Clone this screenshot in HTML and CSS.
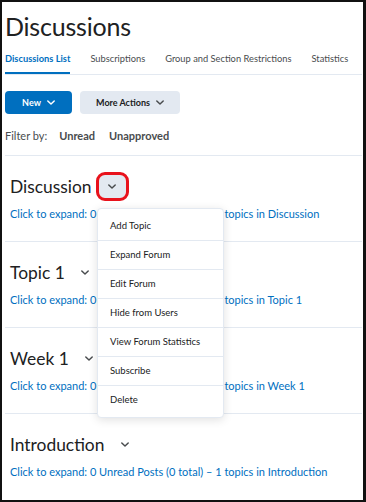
FILE: index.html
```html
<!DOCTYPE html>
<html>
<head>
<meta charset="utf-8">
<link rel="stylesheet" href="styles.css">
</head>
<body>
<div class="frame">
  <h1 class="title">Discussions</h1>
  <nav class="tabs">
    <span class="tab active">Discussions List</span>
    <span class="tab">Subscriptions</span>
    <span class="tab">Group and Section Restrictions</span>
    <span class="tab">Statistics</span>
  </nav>
  <div class="actions">
    <button class="btn primary">New <svg class="chev" viewBox="0 0 10 6"><path d="M1 1l4 4 4-4"/></svg></button>
    <button class="btn secondary">More Actions <svg class="chev" viewBox="0 0 10 6"><path d="M1 1l4 4 4-4"/></svg></button>
  </div>
  <div class="filter">
    <span class="filter-label">Filter by:</span>
    <span class="filter-opt">Unread</span>
    <span class="filter-opt">Unapproved</span>
  </div>

  <section class="forum">
    <div class="forum-head">
      <h2>Discussion</h2>
      <span class="ctx open"><svg class="chev" viewBox="0 0 10 6"><path d="M1 1l4 4 4-4"/></svg></span>
    </div>
    <a class="expand">Click to expand: 0 Unread Posts (0 total) – 1 topics in Discussion</a>
  </section>
  <section class="forum">
    <div class="forum-head">
      <h2>Topic 1</h2>
      <span class="ctx"><svg class="chev" viewBox="0 0 10 6"><path d="M1 1l4 4 4-4"/></svg></span>
    </div>
    <a class="expand">Click to expand: 0 Unread Posts (0 total) – 1 topics in Topic 1</a>
  </section>
  <section class="forum">
    <div class="forum-head">
      <h2>Week 1</h2>
      <span class="ctx"><svg class="chev" viewBox="0 0 10 6"><path d="M1 1l4 4 4-4"/></svg></span>
    </div>
    <a class="expand">Click to expand: 0 Unread Posts (0 total) – 1 topics in Week 1</a>
  </section>
  <section class="forum">
    <div class="forum-head">
      <h2>Introduction</h2>
      <span class="ctx"><svg class="chev" viewBox="0 0 10 6"><path d="M1 1l4 4 4-4"/></svg></span>
    </div>
    <a class="expand">Click to expand: 0 Unread Posts (0 total) – 1 topics in Introduction</a>
  </section>

  <ul class="menu">
    <li>Add Topic</li>
    <li>Expand Forum</li>
    <li>Edit Forum</li>
    <li>Hide from Users</li>
    <li>View Forum Statistics</li>
    <li>Subscribe</li>
    <li>Delete</li>
  </ul>
</div>
</body>
</html>
```

FILE: styles.css
```css
html, body {
  margin: 0;
  padding: 0;
  background: #fff;
}
body {
  font-family: Lato, "Open Sans", sans-serif;
  color: #202122;
}
.frame {
  position: relative;
  box-sizing: border-box;
  width: 366px;
  height: 502px;
  border: 2px solid #111;
  border-right-width: 3px;
  padding: 0 1px 0 3px;
  overflow: hidden;
  background: #fff;
}
.title {
  margin: 9px 0 0 0;
  font-size: 25px;
  font-weight: 400;
  line-height: 30px;
  color: #202122;
  letter-spacing: -0.2px;
}
.tabs {
  display: flex;
  gap: 20px;
  margin-top: 11px;
  border-bottom: 1px solid #e3e9f1;
}
.tab {
  font-size: 9.3px;
  line-height: 14px;
  padding-bottom: 6px;
  color: #494c4e;
  border-bottom: 2px solid transparent;
  white-space: nowrap;
}
.tab.active {
  color: #006fbf;
  font-weight: 700;
  border-bottom-color: #006fbf;
}
.actions {
  display: flex;
  gap: 8px;
  margin-top: 16px;
}
.btn {
  display: flex;
  align-items: center;
  justify-content: center;
  gap: 6px;
  height: 23px;
  border: none;
  border-radius: 4px;
  font-family: Lato, sans-serif;
  font-size: 9px;
  font-weight: 700;
  padding: 0;
}
.btn.primary {
  width: 67px;
  background: #006fbf;
  color: #fff;
}
.btn.primary .chev path { stroke: #fff; }
.btn.secondary {
  width: 100px;
  background: #e3e9f1;
  color: #202122;
}
.chev {
  width: 8px;
  height: 5px;
}
.chev path {
  fill: none;
  stroke: #494c4e;
  stroke-width: 1.8;
  stroke-linecap: round;
  stroke-linejoin: round;
}
.filter {
  display: flex;
  gap: 10px;
  margin-top: 15px;
  font-size: 11px;
  line-height: 14px;
  color: #494c4e;
}
.filter-opt {
  font-weight: 700;
  color: #494c4e;
  margin-left: 2px;
}
.filter-opt + .filter-opt { margin-left: 4px; }
.forum {
  box-sizing: border-box;
  height: 86px;
  border-top: 1px solid #e3e9f1;
  padding: 18px 0 0 5px;
}
.forum:first-of-type { margin-top: 12px; }
.forum-head {
  display: flex;
  align-items: center;
  height: 24px;
}
.forum-head h2 {
  margin: 0;
  font-size: 17.4px;
  font-weight: 400;
  color: #202122;
}
.ctx {
  display: flex;
  align-items: center;
  justify-content: center;
  width: 27px;
  height: 23px;
  margin-left: 7px;
  border-radius: 5px;
}
.ctx.open {
  background: #e3e9f1;
  outline: 3px solid #e8121c;
  outline-offset: 0;
  border-radius: 6px;
}
.expand {
  display: block;
  margin-top: 9px;
  font-size: 11px;
  line-height: 14px;
  color: #006fbf;
}
.menu {
  position: absolute;
  left: 95px;
  top: 206px;
  width: 125px;
  margin: 0;
  padding: 3px 0;
  list-style: none;
  background: #fff;
  border: 1px solid #e3e9f1;
  border-radius: 4px;
  box-shadow: 0 2px 10px rgba(0, 0, 0, 0.12);
}
.menu li {
  height: 28px;
  line-height: 28px;
  padding-left: 12px;
  font-size: 9.5px;
  color: #202122;
}
.menu li + li {
  border-top: 1px solid #e3e9f1;
}
```
